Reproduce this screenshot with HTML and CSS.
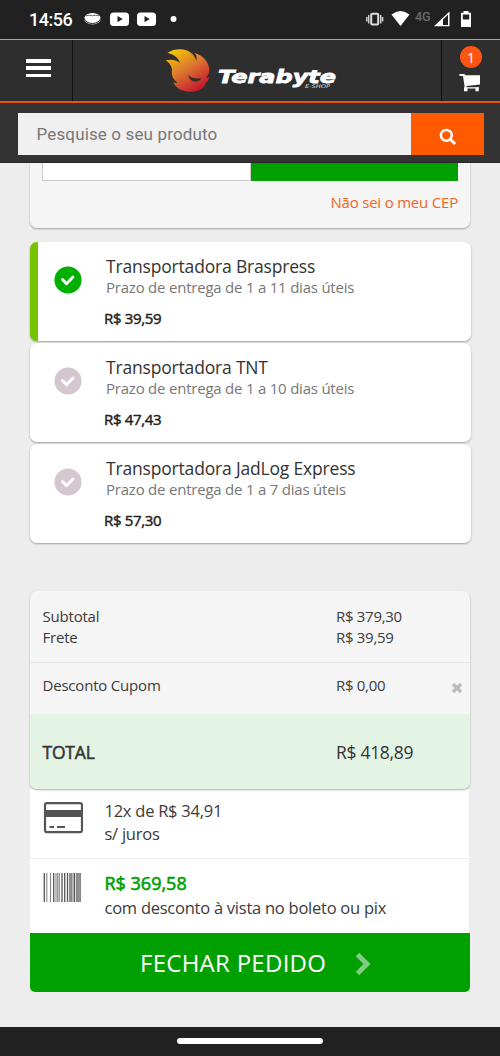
FILE: index.html
```html
<!DOCTYPE html>
<html lang="pt-BR">
<head>
<meta charset="utf-8">
<title>Terabyte</title>
<link rel="stylesheet" href="styles.css">
</head>
<body>
<div class="status">
  <span class="clock">14:56</span>
  <svg class="status-left" width="100" height="39" viewBox="0 0 100 39" fill="#fff">
    <ellipse cx="12.5" cy="18.7" rx="8.3" ry="5.8"/>
    <path d="M4 18.200Q5 21 8 22.600Q12.500 25 17 22.600Q20 21 21 18.200" fill="none" stroke="#212121" stroke-width="1"/>
    <path d="M6 15.800Q9 14.500 12.500 15.800Q16 14.500 19 15.800" fill="none" stroke="#666" stroke-width="1"/>
    <rect x="30" y="12.500" width="19" height="13.500" rx="3.500"/><path d="M37.500 16v6.200l5.200-3.100z" fill="#212121"/>
    <rect x="57" y="12.500" width="19" height="13.500" rx="3.500"/><path d="M64.500 16v6.200l5.200-3.100z" fill="#212121"/>
    <circle cx="93.500" cy="19" r="3"/>
  </svg>
  <svg class="status-right" width="110" height="39" viewBox="364 0 110 39" fill="#fff">
    <rect x="371.200" y="13.700" width="7" height="10.800" rx="1" fill="none" stroke="#ddd" stroke-width="2"/>
    <path d="M368.700 15v8.500M366.800 17v4.500M380.700 15v8.500M382.600 17v4.500" stroke="#ccc" stroke-width="1.500"/>
    <path d="M391.500 14.500Q400.500 7.500 409.500 14.500L400.500 26z"/>
    <text x="415" y="20.500" class="net">4G</text>
    <path d="M434 26.300L449.500 11.500V26.300zM443 19.500V25h5V14.800z" fill-rule="evenodd"/>
    <path d="M463.500 11h5v1.700h2.500V27h-10V12.700h2.500z"/><path d="M462.800 14.500h6.400v5h-6.400z" fill="#212121"/>
  </svg>
</div>
<header class="header">
  <div class="menu"><i></i><i></i><i></i></div>
  <div class="brand">
    <svg width="368" height="60" viewBox="73 40 368 60">
      <defs><linearGradient id="flame" x1="0.100" y1="0" x2="0.750" y2="1"><stop offset="0" stop-color="#f5cf00"/><stop offset=".5" stop-color="#dc7530"/><stop offset="1" stop-color="#c4122f"/></linearGradient></defs>
      <g transform="translate(165.700 49) scale(.3333)">
        <path fill="url(#flame)" d="M5 12C20 2 33 0 45 1C70 1 86 17 92 35C94 24 93 19 86 12C110 17 130 39 131 62C131 73 126 80 119 88L130 84C129 94 125 99 117 104L121 104C111 121 94 128 75 128C48 128 31 118 22 99Q29 103 35 101C22 91 16 79 19 61C16 49 10 40 0 34C16 30 32 32 43 42C38 26 24 15 5 12Z"/>
        <path fill="#342c2d" d="M67 78Q80 91 107 88Q102 98 90 98Q73 98 67 78Z"/>
      </g>
      <text x="218" y="82.500" class="logo-name" textLength="118" lengthAdjust="spacingAndGlyphs">Terabyte</text>
      <text x="305" y="88.300" class="logo-sub" textLength="25" lengthAdjust="spacingAndGlyphs">E-SHOP</text>
    </svg>
  </div>
  <div class="cart">
    <span class="badge">1</span>
    <svg width="22" height="20" viewBox="0 0 22 20"><path fill="#fff" d="M.5 1h5l.8 1.300H21v9.200L7.500 13v1.300h12.200v1.200H5.500V13L4 3H.5z"/><path fill="#fff" d="M5 14.500h3.500v3.800H5zM16.500 14.500h3.200v3.800h-3.200z"/></svg>
  </div>
</header>
<div class="search">
  <div class="search-field">Pesquise o seu produto</div>
  <div class="search-button"><svg width="18" height="18" viewBox="0 0 18 18" fill="none" stroke="#fff"><circle cx="7.300" cy="7.300" r="5.400" stroke-width="2.500"/><path d="M11.300 11.300l4.800 4.700" stroke-width="3"/></svg></div>
</div>
<main class="content">
  <section class="card cep">
    <div class="cep-row"><div class="cep-input"></div><div class="cep-button"></div></div>
    <a class="cep-link">Não sei o meu CEP</a>
  </section>
  <section class="shipping">
    <div class="card option selected">
      <svg class="check" width="28" height="28" viewBox="0 0 28 28"><circle cx="14" cy="14" r="13.600"/><path d="M8.500 13.500l4 4.200L19 11"/></svg>
      <div class="option-text"><div class="name">Transportadora Braspress</div><div class="term">Prazo de entrega de 1 a 11 dias úteis</div><div class="price">R$ 39,59</div></div>
    </div>
    <div class="card option">
      <svg class="check" width="28" height="28" viewBox="0 0 28 28"><circle cx="14" cy="14" r="13.600"/><path d="M8.500 13.500l4 4.200L19 11"/></svg>
      <div class="option-text"><div class="name">Transportadora TNT</div><div class="term">Prazo de entrega de 1 a 10 dias úteis</div><div class="price">R$ 47,43</div></div>
    </div>
    <div class="card option">
      <svg class="check" width="28" height="28" viewBox="0 0 28 28"><circle cx="14" cy="14" r="13.600"/><path d="M8.500 13.500l4 4.200L19 11"/></svg>
      <div class="option-text"><div class="name">Transportadora JadLog Express</div><div class="term">Prazo de entrega de 1 a 7 dias úteis</div><div class="price">R$ 57,30</div></div>
    </div>
  </section>
  <section class="card summary">
    <div class="lines">
      <div class="line"><span>Subtotal</span><span>R$ 379,30</span></div>
      <div class="line"><span>Frete</span><span>R$ 39,59</span></div>
    </div>
    <div class="line coupon"><span>Desconto Cupom</span><span>R$ 0,00</span>
      <svg width="12" height="12" viewBox="0 0 12 12"><path d="M2 2l8 8M10 2l-8 8" stroke="#bbb" stroke-width="3.400"/></svg></div>
    <div class="line total"><strong>TOTAL</strong><span>R$ 418,89</span></div>
  </section>
  <section class="payment">
    <div class="pay pay-card">
      <svg width="40" height="32" viewBox="0 0 40 32"><rect x="2" y="1.200" width="37" height="29" rx="2" fill="none" stroke="#555" stroke-width="2.200"/><path d="M2 8h37v7H2z" fill="#555"/><path d="M6.500 25h4.500M14 25h8" stroke="#555" stroke-width="2.200"/></svg>
      <div class="pay-text">12x de R$ 34,91<br>s/ juros</div>
    </div>
    <div class="pay pay-boleto">
      <svg width="40" height="30" viewBox="0 0 40 30" stroke="#555"><path stroke-width="1.300" d="M1.300 0v29M10.700 0v29M19 0v29M21.700 0v29M24.500 0v29M27 0v29M31.500 0v29M35 0v29"/><path stroke="#888" stroke-width="1.100" d="M3.800 0v29M7.500 0v29M13 0v29M14.700 0v29M16.300 0v29M28.500 0v29M30 0v29M33.500 0v29M36.300 0v29M37.500 0v29"/></svg>
      <div class="pay-text"><b>R$ 369,58</b><br>com desconto à vista no boleto ou pix</div>
    </div>
    <div class="checkout"><span>FECHAR PEDIDO</span><svg width="16" height="24" viewBox="0 0 16 24"><path d="M2.500 2.500L12 12l-9.500 9.500" fill="none" stroke="#82cb82" stroke-width="5"/></svg></div>
  </section>
</main>
<footer class="navbar"><div class="handle"></div></footer>
</body>
</html>
```
FILE: styles.css
```css
* { box-sizing: border-box; }
body { margin: 0; width: 500px; height: 1056px; overflow: hidden; background: #ededed; color: #3b3b3b; font-family: "Open Sans", "Noto Sans", sans-serif; display: flex; flex-direction: column; }
svg { display: block; flex: none; }
.status { height: 40px; flex: none; background: #212121; border-bottom: 1px solid #a5a5a5; display: flex; padding-left: 29px; color: #fff; }
.clock { font: 500 18px/39px Roboto, sans-serif; width: 51px; white-space: nowrap; letter-spacing: -.5px; }
.status-right { margin-left: 184px; }
.net { font: 500 12.5px Roboto, sans-serif; fill: #6b6b6b; }
.header { height: 63px; flex: none; background: #2e2e2e; border-bottom: 2px solid #e95306; display: flex; }
.menu { width: 73px; border-right: 1px solid #111; padding: 19px 0 0 25.500px; display: flex; flex-direction: column; gap: 3.800px; }
.menu i { width: 25px; height: 3.500px; background: #fff; }
.brand { width: 368px; }
.logo-name { font: italic bold 18.500px "DejaVu Sans", sans-serif; fill: #fff; stroke: #fff; stroke-width: .8px; }
.logo-sub { font: italic 5px "DejaVu Sans", sans-serif; fill: #ddd; }
.cart { flex: 1; border-left: 1px solid #111; padding-top: 6px; display: flex; flex-direction: column; align-items: center; gap: 5px; }
.cart svg { margin-right: 2px; }
.badge { width: 22px; height: 22px; border-radius: 50%; background: #ff5512; color: #fff; font-size: 15px; line-height: 22px; text-align: center; }
.search { height: 60px; flex: none; background: #333; display: flex; padding: 10px 16px 8px 18px; position: relative; border-bottom: 1px solid #262626; }
.search-field { width: 393px; height: 42px; background: #f0f0f0; color: #777; font: 17px/43px Roboto, sans-serif; padding-left: 18.500px; letter-spacing: .14px; }
.search-button { width: 73px; height: 42px; background: #ff5a00; display: flex; justify-content: center; align-items: center; padding-top: 5px; }
.content { flex: 1; padding: 0 30px; }
.card { background: #f5f5f5; border-radius: 7px; box-shadow: 0 1px 2px rgba(0,0,0,.32); }
.cep { height: 65px; border-radius: 0 0 7px 7px; padding: 0 12px; margin-bottom: 14px; }
.cep-row { display: flex; height: 18px; }
.cep-input { flex: 1; background: #fff; border: 1px solid #ccc; border-top: 0; }
.cep-button { flex: 1; background: #00a000; }
.cep-link { display: block; color: #f4641c; font-size: 15px; line-height: 20px; text-align: right; margin-top: 11px; letter-spacing: -.2px; }
.shipping { display: flex; flex-direction: column; gap: 2px; }
.option { height: 99px; width: 441px; background: #fff; display: flex; padding-left: 24px; overflow: hidden; }
.selected { border-left: 8px solid #75c400; padding-left: 16px; }
.check { margin-top: 24px; fill: #d4c7d0; }
.check path { fill: none; stroke: #fff; stroke-width: 2.800; stroke-linejoin: round; stroke-linecap: round; }
.selected .check { fill: #00b000; }
.option-text { margin-left: 24px; padding-top: 13px; white-space: nowrap; }
.name { font-size: 17.500px; line-height: 22px; color: #333; letter-spacing: -.18px; }
.term { font-size: 15px; line-height: 20px; color: #777; letter-spacing: -.22px; }
.price { font-size: 15px; line-height: 20px; color: #222; margin: 11px 0 0 -2px; letter-spacing: -.32px; -webkit-text-stroke: .45px #222; }
.summary { margin-top: 48px; height: 198px; width: 440px; overflow: hidden; position: relative; }
.lines { height: 72px; padding-top: 15px; border-bottom: 1px solid #e8e8e8; }
.line { display: flex; padding-left: 12.500px; font-size: 15px; line-height: 21px; white-space: nowrap; letter-spacing: -.2px; }
.line > :first-child { width: 293.500px; }
.line > :nth-child(2) { letter-spacing: -.3px; }
.coupon { height: 51px; padding-top: 12px; }
.coupon svg { margin: 7px 7px 0 auto; }
.total { height: 75px; background: #e3f4e5; font-size: 17.500px; padding-top: 28px; color: #333; }
.total strong { font-weight: 400; -webkit-text-stroke: .5px #333; }
.payment { width: 440px; }
.pay { background: #fff; display: flex; font-size: 16.500px; letter-spacing: -.25px; margin-right: 1px; white-space: nowrap; }
.pay-card { height: 70px; padding: 13px 0 0 13px; border-bottom: 1px solid #eee; }
.pay-boleto { height: 74px; padding: 14px 0 0 13px; }
.pay-text { margin-left: 21.500px; margin-top: -3px; line-height: 23px; }
.pay-boleto .pay-text { line-height: 24px; margin-top: -2px; }
.pay-text b { font-size: 18px; letter-spacing: 0; font-weight: 400; color: #00a000; -webkit-text-stroke: .6px #00a000; }
.checkout { height: 59px; background: #00a000; border-radius: 0 0 5px 5px; display: flex; align-items: center; color: #fff; font-size: 24px; letter-spacing: .27px; padding-left: 110px; }
.checkout svg { margin-left: 29px; margin-top: 3px; }
.navbar { height: 29px; flex: none; background: #212121; display: flex; justify-content: center; padding-top: 11px; }
.handle { width: 146px; height: 6px; border-radius: 3px; background: #fff; }
```
